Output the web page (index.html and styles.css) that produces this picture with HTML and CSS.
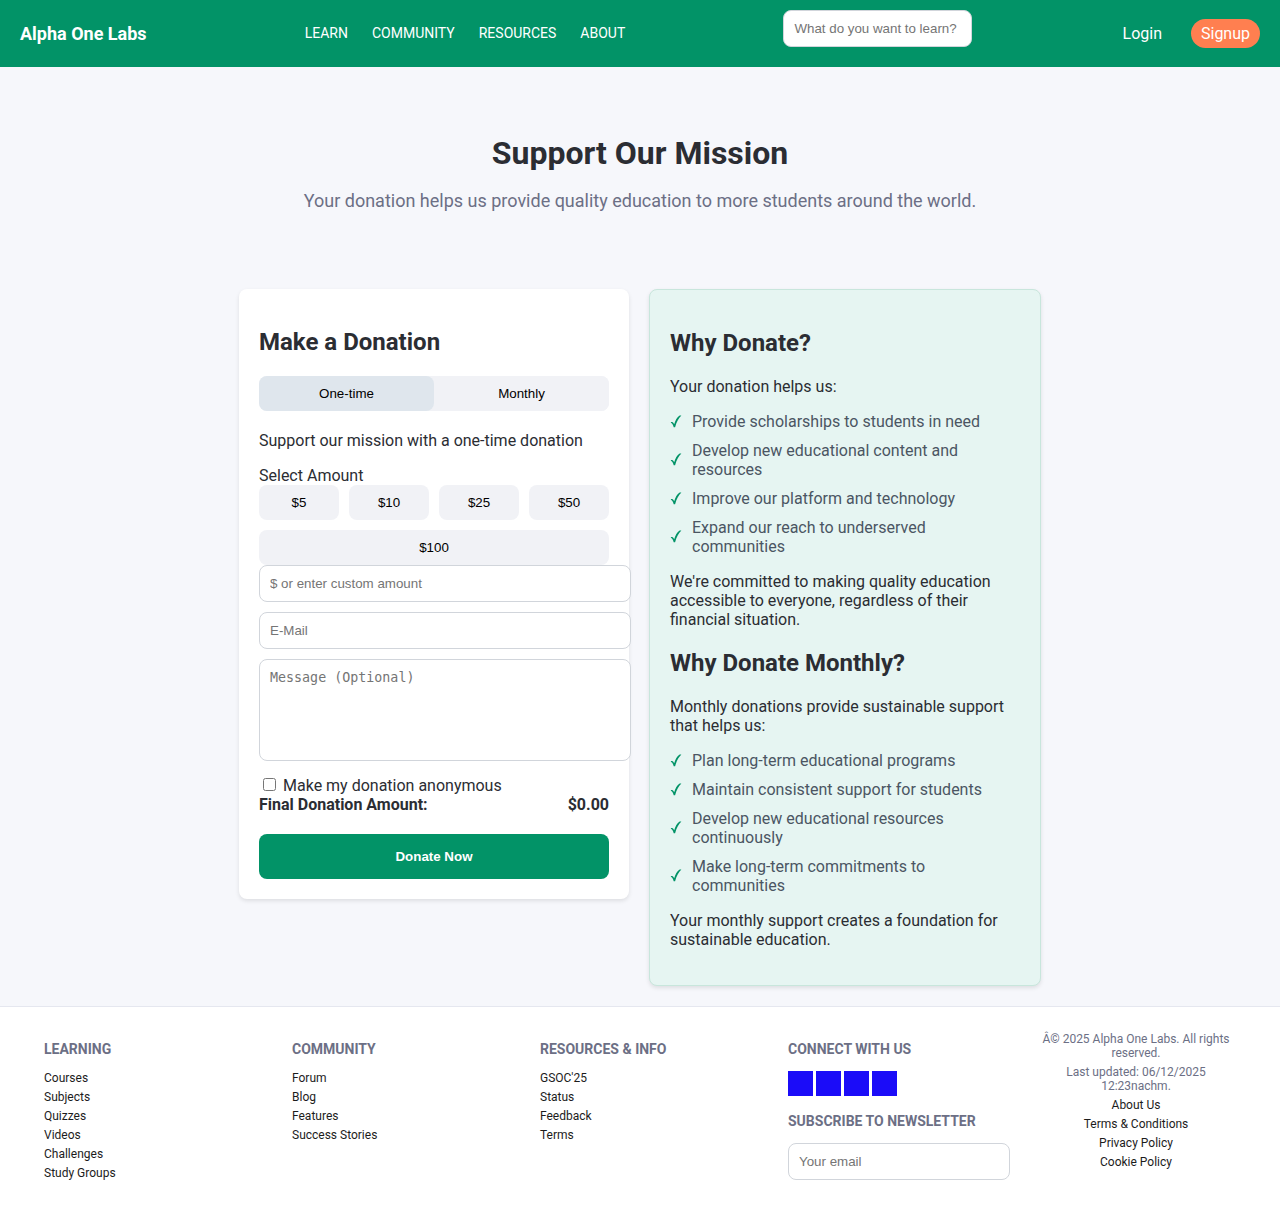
FILE: index.html
```html
<!DOCTYPE html>
<html lang="en">
<head>
<meta charset="utf-8">
<meta name="viewport" content="width=device-width, initial-scale=1">
<title>Donate - Alpha One Labs</title>
<link rel="stylesheet" href="styles.css">
</head>
<body>
<svg class="sprite">
  <symbol id="check" viewBox="0 0 12 14"><path d="M0.9 7.2 C2.6 6.3 3.5 7.4 4.2 9.2 C5.3 5.2 7.2 1.9 9 0.9 C9.7 0.5 10.6 0.6 11.4 0.6 C8.5 3.4 6.5 7.2 5.1 12.3 L3.7 12.3 C3 9.6 2.2 8 0.9 8 Z" fill="currentColor"/></symbol>
</svg>
<header class="site-header">
  <a class="logo" href="#">Alpha One Labs</a>
  <nav class="main-nav">
    <a href="#">LEARN</a>
    <a href="#">COMMUNITY</a>
    <a href="#">RESOURCES</a>
    <a href="#">ABOUT</a>
  </nav>
  <form class="search">
    <input class="field" type="text" aria-label="Search" placeholder="What do you want to learn?">
  </form>
  <div class="auth">
    <a href="#">Login</a>
    <a class="signup" href="#">Signup</a>
  </div>
</header>

<main>
  <section class="hero">
    <h1>Support Our Mission</h1>
    <p>Your donation helps us provide quality education to more students around the world.</p>
  </section>

  <div class="cards">
    <form class="card">
      <h2>Make a Donation</h2>
      <div class="toggle">
        <button class="option selected" type="button">One-time</button>
        <button class="option" type="button">Monthly</button>
      </div>
      <p class="intro">Support our mission with a one-time donation</p>
      <div>Select Amount</div>
      <div class="amounts">
        <button class="option" type="button">$5</button>
        <button class="option" type="button">$10</button>
        <button class="option" type="button">$25</button>
        <button class="option" type="button">$50</button>
        <button class="option wide" type="button">$100</button>
      </div>
      <input class="field" type="text" aria-label="Custom amount" placeholder="$ or enter custom amount">
      <input class="field" type="email" aria-label="E-Mail" placeholder="E-Mail">
      <textarea class="field message" aria-label="Message" placeholder="Message (Optional)"></textarea>
      <div class="anonymous">
        <input type="checkbox" id="anonymous">
        <label for="anonymous">Make my donation anonymous</label>
      </div>
      <div class="total"><span>Final Donation Amount:</span><span>$0.00</span></div>
      <button class="donate" type="submit">Donate Now</button>
    </form>

    <section class="card why">
      <h2>Why Donate?</h2>
      <p>Your donation helps us:</p>
      <ul>
        <li><svg><use href="#check"/></svg><span>Provide scholarships to students in need</span></li>
        <li><svg><use href="#check"/></svg><span>Develop new educational content and resources</span></li>
        <li><svg><use href="#check"/></svg><span>Improve our platform and technology</span></li>
        <li><svg><use href="#check"/></svg><span>Expand our reach to underserved communities</span></li>
      </ul>
      <p>We're committed to making quality education accessible to everyone, regardless of their financial situation.</p>
      <h2>Why Donate Monthly?</h2>
      <p>Monthly donations provide sustainable support that helps us:</p>
      <ul>
        <li><svg><use href="#check"/></svg><span>Plan long-term educational programs</span></li>
        <li><svg><use href="#check"/></svg><span>Maintain consistent support for students</span></li>
        <li><svg><use href="#check"/></svg><span>Develop new educational resources continuously</span></li>
        <li><svg><use href="#check"/></svg><span>Make long-term commitments to communities</span></li>
      </ul>
      <p>Your monthly support creates a foundation for sustainable education.</p>
    </section>
  </div>
</main>

<footer class="site-footer">
  <div class="column">
    <h4>LEARNING</h4>
    <a href="#">Courses</a>
    <a href="#">Subjects</a>
    <a href="#">Quizzes</a>
    <a href="#">Videos</a>
    <a href="#">Challenges</a>
    <a href="#">Study Groups</a>
  </div>
  <div class="column">
    <h4>COMMUNITY</h4>
    <a href="#">Forum</a>
    <a href="#">Blog</a>
    <a href="#">Features</a>
    <a href="#">Success Stories</a>
  </div>
  <div class="column">
    <h4>RESOURCES &amp; INFO</h4>
    <a href="#">GSOC'25</a>
    <a href="#">Status</a>
    <a href="#">Feedback</a>
    <a href="#">Terms</a>
  </div>
  <div class="column">
    <h4>CONNECT WITH US</h4>
    <div class="social">
      <a href="#" aria-label="Facebook"></a>
      <a href="#" aria-label="Twitter"></a>
      <a href="#" aria-label="Instagram"></a>
      <a href="#" aria-label="LinkedIn"></a>
    </div>
    <h4>SUBSCRIBE TO NEWSLETTER</h4>
    <input class="field" type="email" aria-label="Your email" placeholder="Your email">
  </div>
  <div class="column legal">
    <p>Â© 2025 Alpha One Labs. All rights reserved.</p>
    <p>Last updated: 06/12/2025 12:23nachm.</p>
    <a href="#">About Us</a>
    <a href="#">Terms &amp; Conditions</a>
    <a href="#">Privacy Policy</a>
    <a href="#">Cookie Policy</a>
  </div>
</footer>
</body>
</html>
```
FILE: styles.css
```css
body {
  margin: 0;
  min-height: 100vh;
  display: flex;
  flex-direction: column;
  background: #f6f7fb;
  color: #2b2d33;
  font: 16px/19px Roboto, sans-serif;
}

.sprite {
  display: none;
}

a {
  color: inherit;
  text-decoration: none;
}

h2 {
  margin: 20px 0;
  font-size: 24px;
  line-height: 28px;
}

p {
  margin: 16px 0;
}

/* Shared form controls */
.field {
  display: block;
  width: 100%;
  height: 15px;
  padding: 10px;
  margin: 0 0 10px;
  border: 1px solid #d1d5db;
  border-radius: 8px;
  background: #fff;
  font-family: "Liberation Sans", Arial, sans-serif;
  line-height: 15px;
}

.field::placeholder {
  color: #757575;
}

.option,
.donate {
  border: 0;
  border-radius: 8px;
  font-family: "Liberation Sans", Arial, sans-serif;
  line-height: 15px;
}

.option {
  flex: 1;
  padding: 10px;
  background: #f1f2f6;
  color: #000;
}

/* Header */
.site-header {
  display: flex;
  justify-content: space-between;
  align-items: center;
  padding: 10px 20px;
  background: #029367;
  color: #fff;
}

.logo {
  font-size: 18px;
  font-weight: 700;
}

.main-nav {
  display: flex;
  gap: 24px;
  font-size: 14px;
}

.search {
  width: 167px;
}

.auth {
  display: flex;
  align-items: center;
  gap: 29px;
  padding-left: 14px;
}

.signup {
  padding: 5px 10px;
  border-radius: 15px;
  background: #ff7f50;
}

/* Intro */
.hero {
  padding: 67px 20px 78px;
  text-align: center;
}

.hero h1 {
  margin: 0 0 18px;
  font-size: 32px;
  line-height: 38px;
}

.hero p {
  margin: 0;
  color: #6c6f85;
  font-size: 18px;
  line-height: 21px;
}

/* Cards */
.cards {
  display: flex;
  flex-wrap: wrap;
  justify-content: center;
  align-items: flex-start;
  gap: 20px;
  margin-bottom: 20px;
}

.card {
  width: 350px;
  padding: 19px 20px 20px;
  border-radius: 8px;
  background: #fff;
  box-shadow: 0 2px 4px rgba(0, 0, 0, 0.1);
}

.toggle {
  display: flex;
  border-radius: 8px;
  background: #f1f2f6;
}

.option.selected {
  background: #dfe6ed;
}

.intro {
  margin-top: 20px;
}

.amounts {
  display: grid;
  grid-template-columns: repeat(4, 1fr);
  gap: 10px;
}

.wide {
  grid-column: 1 / -1;
}

.message {
  height: 80px;
  margin-bottom: 15px;
  resize: none;
  font-family: "DejaVu Sans Mono", monospace;
}

.anonymous {
  display: flex;
  align-items: center;
  gap: 4px;
}

.anonymous input {
  margin: 0 3px 2px 4px;
}

.total {
  display: flex;
  justify-content: space-between;
  margin-bottom: 20px;
  font-weight: 700;
}

.donate {
  width: 100%;
  padding: 15px;
  background: #029367;
  color: #fff;
  font-weight: 700;
}

.why {
  border: 1px solid #c8e6dc;
  background: #e6f5f2;
}

.why ul {
  margin: 16px 0;
  padding: 0;
  list-style: none;
}

.why li {
  display: flex;
  align-items: center;
  gap: 10px;
  margin: 10px 0;
  color: #4b5563;
}

.why svg {
  flex: none;
  width: 12px;
  height: 14px;
  color: #029367;
}

/* Footer */
.site-footer {
  flex: 1;
  display: flex;
  flex-wrap: wrap;
  justify-content: space-around;
  padding: 20px;
  border-top: 1px solid #e5e7ef;
  background: #fff;
  font-size: 12px;
  line-height: 14px;
}

.column {
  width: 200px;
}

.column h4 {
  margin: 14px 0;
  color: #6c6f85;
  font-size: 14px;
  line-height: 16px;
}

.column > a {
  display: block;
  margin: 5px 0;
  color: #1c1c1c;
}

.social {
  display: flex;
  gap: 3px;
  margin-bottom: 17px;
}

.social a {
  width: 25px;
  height: 25px;
  background: #1b0cf8;
}

.legal {
  text-align: center;
}

.legal p {
  margin: 5px 0;
  color: #6c6f85;
}
```
